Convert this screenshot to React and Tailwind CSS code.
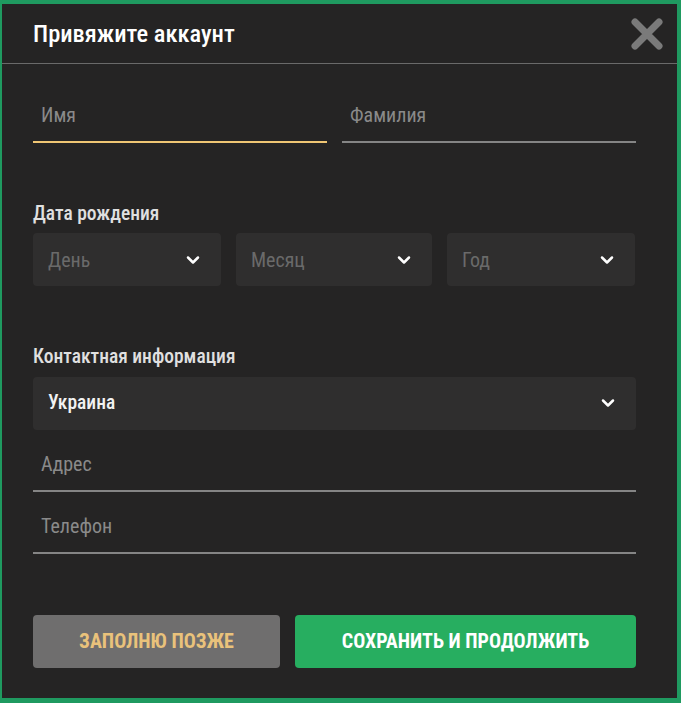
import { ChevronDown } from "lucide-react";

const font = {
  fontFamily: '"Roboto Condensed", "Roboto", "Liberation Sans", sans-serif',
  fontStretch: "condensed",
};

function Underlined({ label, active }) {
  return (
    <div className={`h-[52px] flex items-center border-b-2 px-2 pb-[2px] ${active ? "border-[#f0c674]" : "border-[#858585]"}`}>
      <span className="text-[20px] text-[#8a8a8a]">{label}</span>
    </div>
  );
}

function Select({ label, className = "", strong }) {
  return (
    <div className={`h-[53px] flex items-center justify-between rounded bg-[#2f2e2e] pl-[15px] pr-[18px] ${className}`}>
      <span className={strong ? "text-[19.5px] font-medium text-[#f2f2f2]" : "text-[20px] text-[#6a6a6a]"}>{label}</span>
      <ChevronDown size={20} strokeWidth={3} className="text-white" />
    </div>
  );
}

export default function App() {
  return (
    <div style={font} className="w-[681px] h-[703px] bg-[#1f9a60] pt-[4px] pl-[2px] pr-[4px] pb-[5px]">
      <div className="h-full bg-[#252424] flex flex-col">
        <div className="h-[60px] flex items-center justify-between pl-[31px] pr-[13px] border-b border-[#6a6a6a]">
          <div className="text-[24.5px] font-medium text-white pt-[2px]">Привяжите аккаунт</div>
          <svg width="34" height="32" viewBox="0 0 34 32">
            <path d="M5 4 L29 28 M29 4 L5 28" stroke="#7a7a7a" strokeWidth="7" strokeLinecap="round" />
          </svg>
        </div>

        <div className="pl-[31px] pr-[41px] flex flex-col">
          <div className="grid grid-cols-2 gap-[15px] mt-[27px]">
            <Underlined label="Имя" active />
            <Underlined label="Фамилия" />
          </div>

          <div className="mt-[56px] text-[19.5px] font-medium text-[#e0e0e0]">Дата рождения</div>
          <div className="flex gap-[15px] mt-[5px]">
            <Select label="День" className="w-[188px]" />
            <Select label="Месяц" className="w-[196px]" />
            <Select label="Год" className="w-[188px]" />
          </div>

          <div className="mt-[56px] text-[19.5px] font-medium text-[#e0e0e0]">Контактная информация</div>
          <Select label="Украина" strong className="mt-[5px]" />

          <div className="mt-[10px]"><Underlined label="Адрес" /></div>
          <div className="mt-[10px]"><Underlined label="Телефон" /></div>

          <div className="flex gap-[15px] mt-[61px]">
            <button className="w-[247px] h-[53px] rounded bg-[#6f6e6e] text-[20px] font-bold uppercase text-[#e9c27b]">
              Заполню позже
            </button>
            <button className="flex-1 h-[53px] rounded bg-[#27ae60] text-[20px] font-bold uppercase text-white">
              Сохранить и продолжить
            </button>
          </div>
        </div>
      </div>
    </div>
  );
}
